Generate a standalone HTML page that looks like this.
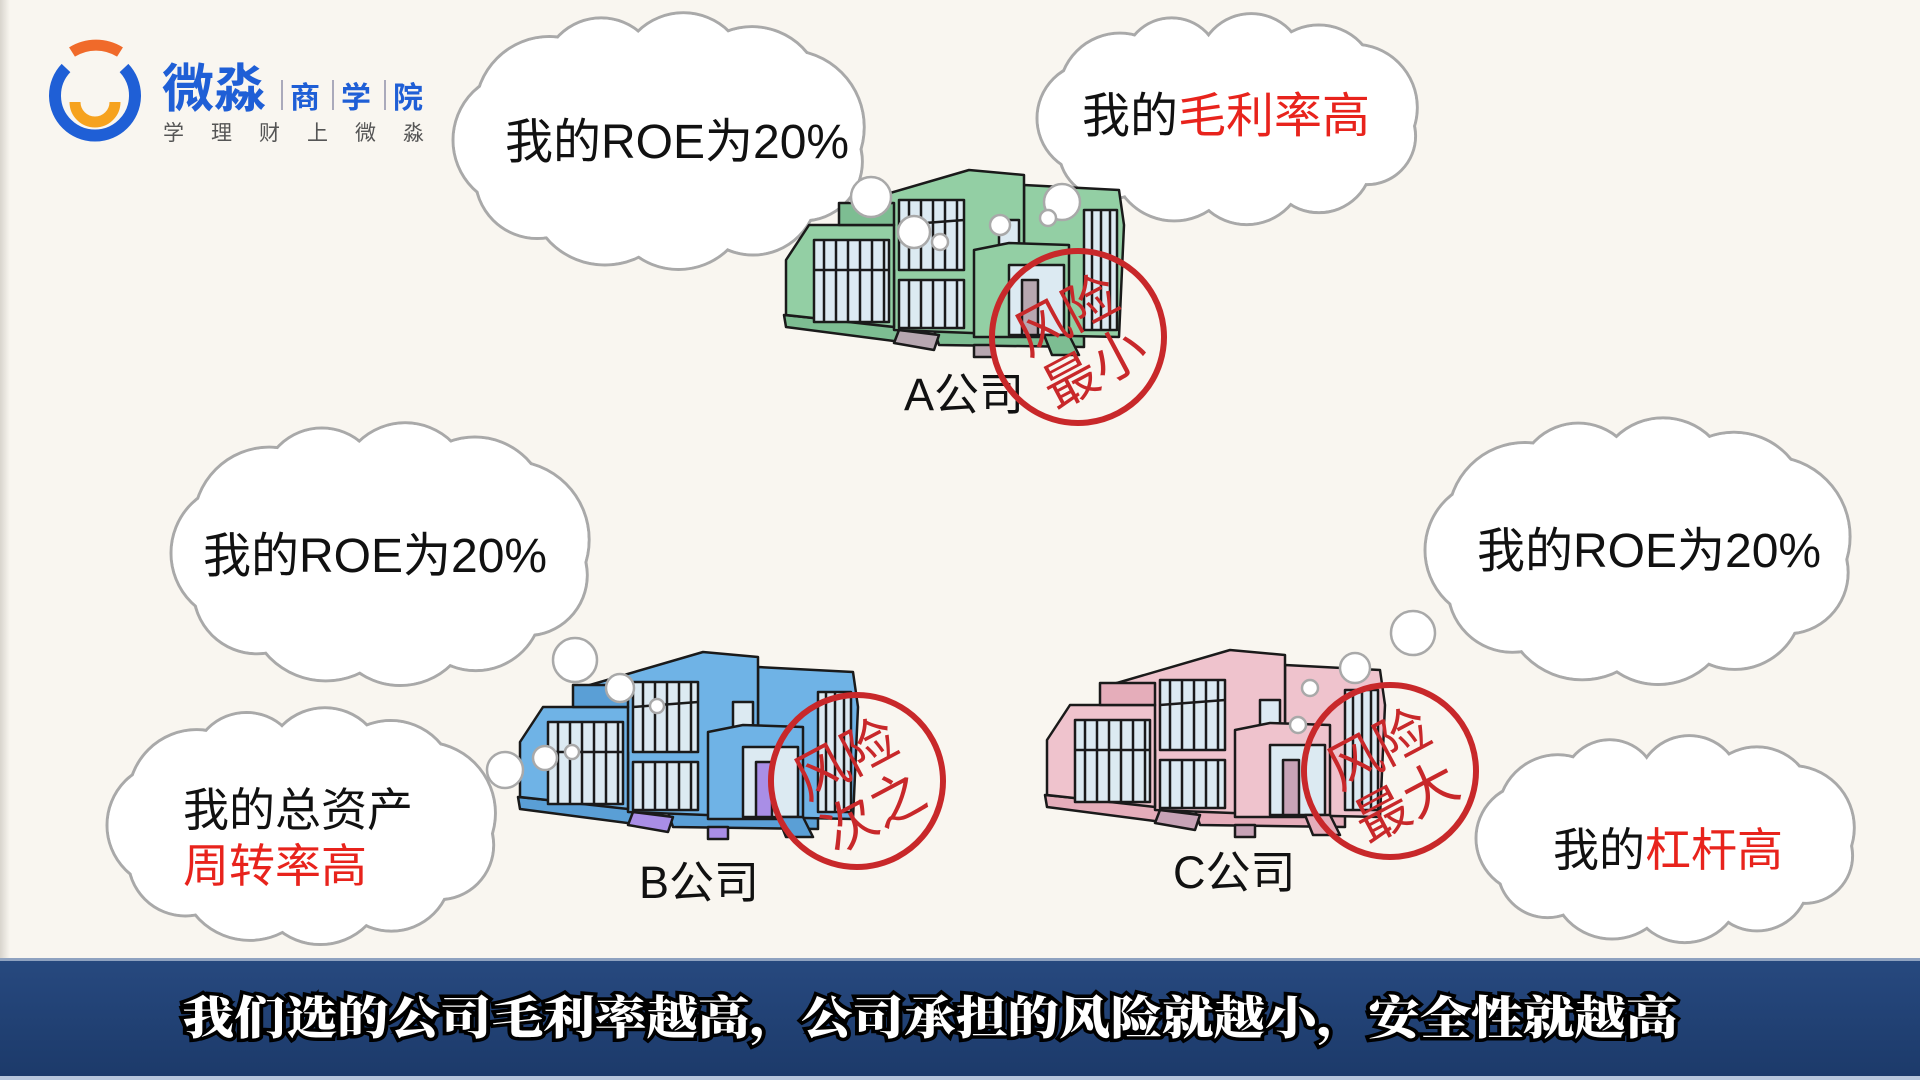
<!DOCTYPE html>
<html><head><meta charset="utf-8">
<style>
html,body{margin:0;padding:0;width:1920px;height:1080px;overflow:hidden;background:#f9f6f0;}
svg{display:block}
.t{font-family:"Liberation Sans","Noto Sans CJK SC",sans-serif;fill:#111;}
.r{fill:#e8231c;}
.stamp{font-family:"Noto Sans CJK SC","WenQuanYi Zen Hei",sans-serif;fill:#c8282a;font-weight:normal;}
.sub{font-family:"Noto Serif CJK SC","Noto Sans CJK SC",serif;font-weight:900;fill:#fff;stroke:#000;stroke-width:7;paint-order:stroke;}
</style></head>
<body>
<svg id="s" width="1920" height="1080" viewBox="0 0 1920 1080" xmlns="http://www.w3.org/2000/svg">
<defs>
<linearGradient id="lg" x1="0" y1="0" x2="1" y2="0"><stop offset="0" stop-color="#d8d4cd"/><stop offset="1" stop-color="#f9f6f0"/></linearGradient>
<linearGradient id="bar" x1="0" y1="0" x2="0" y2="1"><stop offset="0" stop-color="#27497f"/><stop offset="1" stop-color="#1c3a6a"/></linearGradient>
</defs>
<rect x="0" y="0" width="10" height="960" fill="url(#lg)"/>
<g id="clouds"></g>
<g id="bld"></g>
<g id="bub"></g>

<!-- logo -->
<path d="M72 52 A45 45 0 0 1 120 52" fill="none" stroke="#f06a2a" stroke-width="11"/>
<path d="M66 68 A40 40 0 1 0 124 68" fill="none" stroke="#1f5fd6" stroke-width="12"/>
<path d="M75 102 A20 20 0 0 0 115 102" fill="none" stroke="#f6a21e" stroke-width="11"/>
<text x="162" y="107" font-family="Noto Sans CJK SC,sans-serif" font-size="52" fill="#1f5fd6" font-weight="bold">微淼</text>
<rect x="281" y="80" width="2" height="30" fill="#aab"/>
<rect x="332" y="80" width="2" height="30" fill="#aab"/>
<rect x="384" y="80" width="2" height="30" fill="#aab"/>
<text x="290" y="108" font-family="Noto Sans CJK SC,sans-serif" font-size="30" fill="#1f5fd6" font-weight="bold">商</text>
<text x="341" y="108" font-family="Noto Sans CJK SC,sans-serif" font-size="30" fill="#1f5fd6" font-weight="bold">学</text>
<text x="393" y="108" font-family="Noto Sans CJK SC,sans-serif" font-size="30" fill="#1f5fd6" font-weight="bold">院</text>
<text x="163" y="140" font-family="Noto Sans CJK SC,sans-serif" font-size="21" fill="#555" letter-spacing="27">学理财上微淼</text>

<!-- cloud texts -->
<text class="t" x="505" y="158" font-size="48">我的ROE为20%</text>
<text class="t" x="1082" y="132" font-size="48">我的<tspan class="r">毛利率高</tspan></text>
<text class="t" x="203" y="572" font-size="48">我的ROE为20%</text>
<text class="t" x="183" y="826" font-size="46">我的总资产</text>
<text class="t r" x="183" y="882" font-size="46">周转率高</text>
<text class="t" x="1477" y="567" font-size="48">我的ROE为20%</text>
<text class="t" x="1553" y="866" font-size="46">我的<tspan class="r">杠杆高</tspan></text>

<!-- company labels -->
<text class="t" x="904" y="410" font-size="45">A公司</text>
<text class="t" x="639" y="898" font-size="45">B公司</text>
<text class="t" x="1173" y="888" font-size="45">C公司</text>

<!-- stamps -->
<g transform="translate(1078,337) rotate(-28)">
<circle r="86" fill="none" stroke="#c8282a" stroke-width="6"/>
<text class="stamp" x="0" y="-6" font-size="54" text-anchor="middle">风险</text>
<text class="stamp" x="0" y="54" font-size="54" text-anchor="middle">最小</text></g>
<g transform="translate(857,781) rotate(-28)">
<circle r="86" fill="none" stroke="#c8282a" stroke-width="6"/>
<text class="stamp" x="0" y="-6" font-size="54" text-anchor="middle">风险</text>
<text class="stamp" x="0" y="54" font-size="54" text-anchor="middle">次之</text></g>
<g transform="translate(1390,771) rotate(-28)">
<circle r="86" fill="none" stroke="#c8282a" stroke-width="6"/>
<text class="stamp" x="0" y="-6" font-size="54" text-anchor="middle">风险</text>
<text class="stamp" x="0" y="54" font-size="54" text-anchor="middle">最大</text></g>

<!-- subtitle bar -->
<rect x="0" y="960" width="1920" height="117" fill="url(#bar)"/>
<rect x="0" y="958" width="1920" height="3" fill="#8fa2c0"/>
<rect x="0" y="1076" width="1920" height="4" fill="#b7c6dc"/>
<text class="sub" x="930" y="1034" font-size="46" text-anchor="middle" textLength="1495" lengthAdjust="spacingAndGlyphs">我们选的公司毛利率越高，公司承担的风险就越小，安全性就越高</text>
</svg>
<script>
var NS="http://www.w3.org/2000/svg";
function el(p,t,a){var e=document.createElementNS(NS,t);for(var k in a)e.setAttribute(k,a[k]);p.appendChild(e);return e;}
function cloud(x0,y0,x1,y1){
 var g=document.getElementById('clouds');
 var cx=(x0+x1)/2,cy=(y0+y1)/2,w=x1-x0,h=y1-y0;
 var n=11,cs=[];
 var r=Math.min(w,h)*0.27;
 for(var i=0;i<n;i++){var a=i/n*2*Math.PI+0.3;
  var rr=r*(0.85+0.3*((i*37)%7)/7);
  cs.push([cx+(w/2-rr)*Math.cos(a),cy+(h/2-rr)*Math.sin(a),rr]);}
 cs.forEach(function(c){el(g,'circle',{cx:c[0],cy:c[1],r:c[2],fill:'#fff',stroke:'#a9a9a9','stroke-width':3});});
 cs.forEach(function(c){el(g,'circle',{cx:c[0],cy:c[1],r:c[2]-1.5,fill:'#fff'});});
 el(g,'ellipse',{cx:cx,cy:cy,rx:w/2-r*0.9,ry:h/2-r*0.9,fill:'#fff'});
}
cloud(453,12,869,270);
cloud(1037,13,1422,225);
cloud(171,422,594,686);
cloud(107,707,500,945);
cloud(1425,417,1855,685);
cloud(1476,735,1859,943);

function bld(ox,oy,c1,c2,door){
 var g=el(document.getElementById('bld'),'g',{transform:'translate('+ox+','+oy+')',stroke:'#1a1a1a','stroke-width':2.5,'stroke-linejoin':'round'});
 var gl='#dceaf2';
 el(g,'polygon',{points:'0,150 120,162 125,178 2,162',fill:c2});
 el(g,'polygon',{points:'150,165 300,168 300,182 155,180',fill:c2});
 el(g,'rect',{x:190,y:180,width:20,height:12,fill:door});
 el(g,'polygon',{points:'115,165 155,170 150,185 110,178',fill:door});
 el(g,'polygon',{points:'240,20 335,25 340,60 335,172 240,170',fill:c1});
 el(g,'rect',{x:300,y:45,width:33,height:120,fill:gl});
 for(var i=0;i<3;i++)el(g,'line',{x1:308+i*9,y1:45,x2:308+i*9,y2:165});
 el(g,'polygon',{points:'65,40 185,5 240,10 240,170 110,165 110,105 55,100',fill:c1});
 el(g,'rect',{x:115,y:35,width:65,height:70,fill:gl});
 el(g,'rect',{x:115,y:115,width:65,height:48,fill:gl});
 for(i=0;i<5;i++){el(g,'line',{x1:125+i*12,y1:35,x2:125+i*12,y2:105});el(g,'line',{x1:125+i*12,y1:115,x2:125+i*12,y2:163});}
 el(g,'line',{x1:115,y1:60,x2:180,y2:55});
 el(g,'rect',{x:215,y:55,width:20,height:45,fill:gl});
 el(g,'polygon',{points:'2,95 25,60 110,60 110,162 2,150',fill:c1});
 el(g,'rect',{x:30,y:75,width:75,height:82,fill:gl});
 for(i=0;i<6;i++)el(g,'line',{x1:40+i*12,y1:75,x2:40+i*12,y2:157});
 el(g,'line',{x1:30,y1:105,x2:105,y2:105});
 el(g,'rect',{x:55,y:38,width:55,height:22,fill:c2});
 el(g,'polygon',{points:'190,85 225,78 285,80 285,172 190,172',fill:c1});
 el(g,'rect',{x:225,y:100,width:55,height:70,fill:gl});
 el(g,'rect',{x:238,y:115,width:16,height:55,fill:door});
 el(g,'polygon',{points:'260,170 285,170 295,190 268,190',fill:c2});
}
bld(784,165,'#93cfa4','#7dbd92','#b7a7b0');
bld(518,647,'#6fb3e6','#5a9fd6','#a98ee6');
bld(1045,645,'#efc3cd','#e5adba','#c7a3b6');

var bb=[[871,197,20],[914,232,16],[940,242,8],[1000,225,10],[1062,202,18],[1048,218,8],[575,660,22],[620,688,14],[657,706,7],[505,770,18],[545,758,12],[572,752,7],[1413,633,22],[1355,668,15],[1310,688,8],[1298,725,8]];
var b=document.getElementById('bub');
bb.forEach(function(c){el(b,'circle',{cx:c[0],cy:c[1],r:c[2],fill:'#fff',stroke:'#a9a9a9','stroke-width':2.5});});
</script>
</body></html>
